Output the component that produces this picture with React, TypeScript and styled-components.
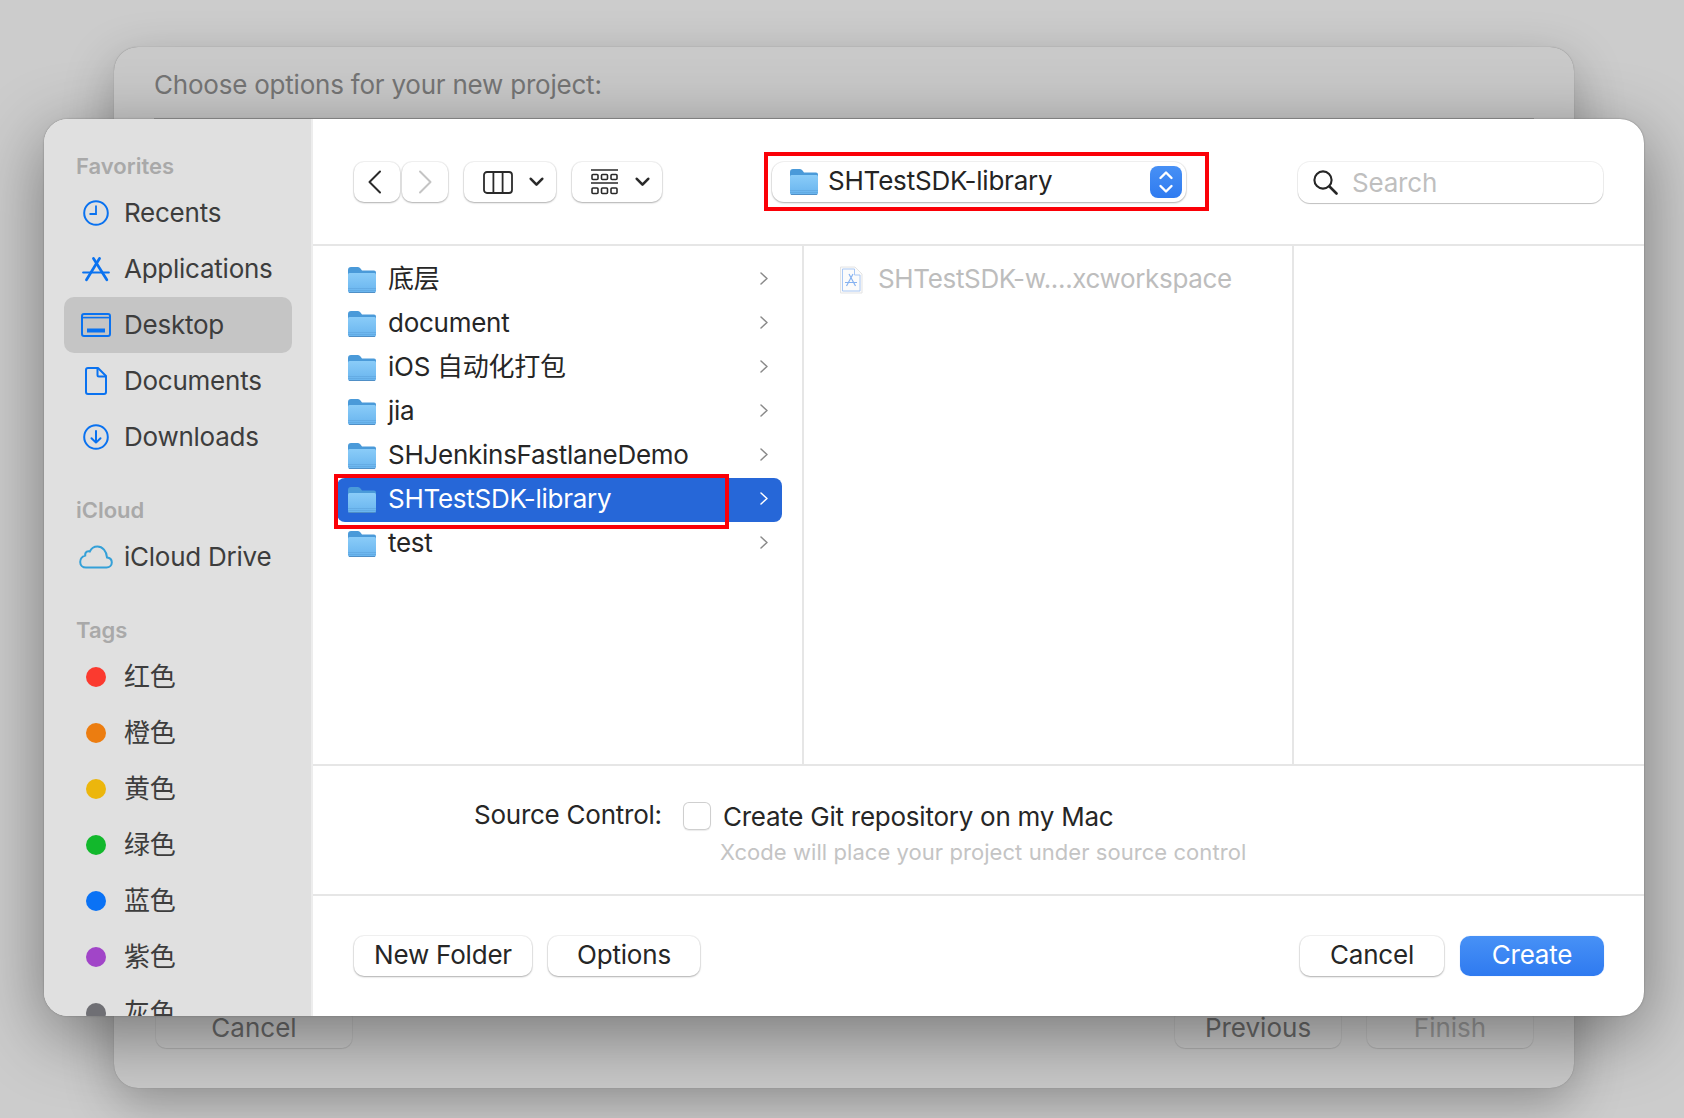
import React from 'react';
import styled, { createGlobalStyle } from 'styled-components';

const Global = createGlobalStyle`
  html, body { margin: 0; padding: 0; }
  body { font-family: Inter, "Noto Sans CJK SC", sans-serif; }
`;

const SANS = 'Inter, "Noto Sans CJK SC", sans-serif';

const Page = styled.div`
  position: relative; width: 1684px; height: 1118px; overflow: hidden;
  background: #cccccc; box-sizing: border-box; padding: 47px 110px 30px 114px;
  font-family: ${SANS};
`;
const BackWindow = styled.div`
  height: 1041px; box-sizing: border-box; border-radius: 24px; background: #c9c9c9;
  box-shadow: 0 0 1px #777, 0 16px 50px rgba(0,0,0,.28);
  padding: 25px 40px 40px; display: flex; flex-direction: column; justify-content: space-between;
`;
const BackTitle = styled.div`
  font-size: 26px; line-height: 26px; color: #757575; height: 46px; border-bottom: 2px solid #9a9a9a;
  letter-spacing: -0.22px;
`;
const BackFooter = styled.div`display: flex; gap: 26px; padding: 0 1px 0 2px;`;
const BackButton = styled.div<{ $faded?: boolean; $first?: boolean; $w: number }>`
  width: ${p => p.$w}px; height: 40px; box-sizing: border-box; border-radius: 10px;
  display: flex; align-items: center; justify-content: center; font-size: 26px; padding-bottom: 2px;
  background: rgba(255,255,255,.03); box-shadow: 0 0 0 1px rgba(0,0,0,.04), 0 1px 1px rgba(0,0,0,.08);
  color: ${p => (p.$faded ? '#9a9a9a' : '#6a6a6a')};
  margin-right: ${p => (p.$first ? 'auto' : '0')};
`;

const Dialog = styled.div`
  position: absolute; left: 44px; top: 119px; width: 1600px; height: 897px;
  border-radius: 24px; overflow: hidden; display: flex; background: #fff;
  box-shadow: 0 0 1.5px #666, 0 18px 70px rgba(0,0,0,.42);
`;
const Sidebar = styled.aside`
  flex: none; background: #e0e0e0; border-right: 2px solid #ededed;
  padding: 31px 19px 0 20px; width: 228px; overflow: hidden;
`;
const GroupLabel = styled.div<{ $mt?: number }>`
  font-size: 22px; font-weight: 600; line-height: 32px; color: #a9a9a9; padding-left: 12px;
  margin-top: ${p => p.$mt ?? 0}px; margin-bottom: 3px;
`;
const SideItem = styled.div<{ $active?: boolean }>`
  height: 56px; border-radius: 10px; display: flex; align-items: center; box-sizing: border-box;
  background: ${p => (p.$active ? '#c5c5c5' : 'transparent')};
  font-size: 26px; line-height: 32px; color: #3d3d3d; letter-spacing: -0.25px;
`;
const SideIcon = styled.span`
  width: 57px; padding-left: 3px; flex: none; display: flex; justify-content: center;
`;
const SideText = styled.span``;
const Dot = styled.span<{ $c: string }>`
  width: 20px; height: 20px; border-radius: 50%; background: ${p => p.$c}; display: block;
`;

const Main = styled.main`flex: 1; min-width: 0; display: flex; flex-direction: column;`;
const Toolbar = styled.div`
  height: 127px; flex: none; box-sizing: border-box; border-bottom: 2px solid #e6e6e6;
  display: flex; align-items: center; padding: 1px 41px 0;
`;
const ToolButton = styled.div<{ $w: number; $ml?: number; $pl?: number; $gap?: number; $pr?: number }>`
  width: ${p => p.$w}px; height: 40px; box-sizing: border-box; border-radius: 10px; background: #fff;
  margin-left: ${p => p.$ml ?? 0}px; display: flex; align-items: center;
  justify-content: ${p => (p.$pl ? 'flex-start' : 'center')};
  padding: 0 ${p => p.$pr ?? 0}px 0 ${p => p.$pl ?? 0}px; gap: ${p => p.$gap ?? 16}px;
  box-shadow: 0 0 0 1px rgba(0,0,0,.05), 0 1px 2px rgba(0,0,0,.28);
`;
const PathPopup = styled.div`
  position: relative; width: 414px; height: 40px; margin-left: 110px; border-radius: 12px; background: #fff;
  box-shadow: 0 0 0 1px rgba(0,0,0,.05), 0 1px 2px rgba(0,0,0,.28);
  display: flex; align-items: center; padding: 0 4px 0 18px; box-sizing: border-box; gap: 10px;
  font-size: 26px; line-height: 32px; color: #242424; letter-spacing: -0.2px;
`;
const PopupText = styled.span`margin-bottom: 3px;`;
const Stepper = styled.span`
  margin-left: auto; width: 32px; height: 32px; border-radius: 8px; display: flex; align-items: center; justify-content: center;
  background: linear-gradient(#4790f5, #2f7bf0);
`;
const RedFrame = styled.div`
  position: absolute; pointer-events: none; border: 4px solid #fb0007; box-sizing: border-box;
  left: -8px; top: -10px; width: 445px; height: 59px;
`;
const SearchBox = styled.div`
  margin-left: auto; width: 305px; height: 41px; box-sizing: border-box; border-radius: 12px;
  box-shadow: 0 0 0 1px rgba(0,0,0,.06), 0 1px 1px rgba(0,0,0,.2);
  display: flex; align-items: center; padding-left: 15px; gap: 14px;
  font-size: 26px; color: #bfbfbf; letter-spacing: -0.2px;
`;

const Columns = styled.div`
  height: 518px; flex: none; display: grid; grid-template-columns: 491px 490px 1fr; border-bottom: 2px solid #e6e6e6;
`;
const Column = styled.div`
  border-right: 2px solid #e6e6e6; padding: 12px 20px 0 24px; box-sizing: border-box;
  &:last-child { border-right: none; }
`;
const FileRow = styled.div<{ $selected?: boolean }>`
  position: relative; height: 44px; display: flex; align-items: center; gap: 12px; padding: 0 14px 0 11px;
  border-radius: 8px; font-size: 26px; line-height: 32px; letter-spacing: -0.27px;
  background: ${p => (p.$selected ? '#2667d8' : 'transparent')};
  color: ${p => (p.$selected ? '#fff' : '#262626')};
`;
const RowText = styled.span`margin-bottom: 2px;`;
const RowRed = styled.div`
  position: absolute; pointer-events: none; border: 4px solid #fb0007; box-sizing: border-box;
  left: -3px; top: -4px; width: 395px; height: 55px;
`;
const Chevron = styled.span`margin: 0 0 3px auto; display: flex;`;
const FileName = styled.span`color: #bdbdbd; margin: 0 0 2px 3px; letter-spacing: -0.35px;`;

const SourceSection = styled.div`
  height: 130px; flex: none; box-sizing: border-box; border-bottom: 2px solid #e6e6e6;
  padding: 36px 0 0 161px; display: grid; grid-template-columns: 209px 41px 1fr; grid-template-rows: 28px auto;
  align-items: center; align-content: start; font-size: 26px; color: #262626;
`;
const SourceLabel = styled.span`letter-spacing: -0.25px; margin-bottom: 3px;`;
const Checkbox = styled.span`
  width: 28px; height: 28px; box-sizing: border-box; border-radius: 6px; background: #fff;
  box-shadow: inset 0 0 0 1px #cfcfcf, 0 1px 1px rgba(0,0,0,.08);
`;
const CheckLabel = styled.span`letter-spacing: -0.25px; margin-left: -1px;`;
const Hint = styled.div`
  grid-column: 3; margin: 8px 0 0 -4px; font-size: 22px; line-height: 28px; color: #c4c4c4; letter-spacing: 0.06px;
`;

const BottomBar = styled.div`flex: 1; display: flex; align-items: center; padding: 0 40px 0 41px; gap: 16px;`;
const Button = styled.div<{ $w: number; $primary?: boolean; $push?: boolean }>`
  width: ${p => p.$w}px; height: 40px; box-sizing: border-box; border-radius: 10px; padding-bottom: 3px;
  display: flex; align-items: center; justify-content: center; font-size: 26px; letter-spacing: -0.2px;
  margin-left: ${p => (p.$push ? 'auto' : '0')};
  color: ${p => (p.$primary ? '#fff' : '#262626')};
  background: ${p => (p.$primary ? 'linear-gradient(#4791f6, #2f7af0)' : '#fff')};
  box-shadow: ${p => (p.$primary ? '0 0 1px rgba(47,122,240,.4)' : '0 0 0 1px rgba(0,0,0,.05), 0 1px 2px rgba(0,0,0,.28)')};
`;

const BLUE = '#0a72f0';

const Clock = () => (
  <svg width="26" height="26" viewBox="0 0 26 26" fill="none" stroke={BLUE} strokeWidth="2">
    <circle cx="13" cy="13" r="11.8" />
    <path d="M13 5.5V14H6.5" strokeWidth="1.8" />
  </svg>
);
const AppIcon = () => (
  <svg width="28" height="25" viewBox="0 0 28 25" fill="none" stroke={BLUE} strokeWidth="2.7" strokeLinecap="round">
    <path d="M11.5 1.5L24.8 22.8" />
    <path d="M17.5 1.5L4.5 22.8" />
    <path d="M1.2 15.5H26.8" strokeWidth="2.2" />
  </svg>
);
const DesktopIcon = () => (
  <svg width="30" height="24" viewBox="0 0 30 24" fill="none">
    <rect x="1" y="1" width="28" height="22" rx="2" stroke={BLUE} strokeWidth="2" />
    <path d="M1 4.6H29" stroke={BLUE} strokeWidth="1.6" />
    <rect x="6" y="15.5" width="18" height="4" fill={BLUE} />
  </svg>
);
const DocIcon = () => (
  <svg width="22" height="28" viewBox="0 0 22 28" fill="none" stroke={BLUE} strokeWidth="2" strokeLinejoin="round">
    <path d="M3 1H13L21 9V25Q21 27 19 27H3Q1 27 1 25V3Q1 1 3 1Z" />
    <path d="M12.5 1.5V8Q12.5 9.5 14 9.5H20.5" />
  </svg>
);
const DownIcon = () => (
  <svg width="26" height="26" viewBox="0 0 26 26" fill="none" stroke={BLUE} strokeWidth="2" strokeLinecap="round" strokeLinejoin="round">
    <circle cx="13" cy="13" r="11.8" />
    <path d="M13 7V18.5M8.5 14.2L13 18.6L17.5 14.2" />
  </svg>
);
const CloudIcon = () => (
  <svg width="34" height="24" viewBox="0 0 34 24" fill="none" stroke="#34a0d8" strokeWidth="2">
    <path d="M7 22.5H27.5C30.5 22.5 32.8 20.3 32.8 17.4C32.8 14.6 30.8 12.7 28 12.4C27.6 6.2 23.6 1.5 18.4 1.5C14.8 1.5 12.2 3.5 10.8 6.5C9.8 6 8.8 6 7.8 6.6C6.5 7.4 6 9 6.2 10.6C3.2 11.5 1.2 14 1.2 16.9C1.2 20.2 3.7 22.5 7 22.5Z" />
  </svg>
);
const Folder = () => (
  <svg width="28" height="26" viewBox="0 0 28 26" style={{ flex: 'none' }}>
    <defs>
      <linearGradient id="fb" x1="0" y1="0" x2="0" y2="1">
        <stop offset="0" stopColor="#8accf8" />
        <stop offset="1" stopColor="#68b4ee" />
      </linearGradient>
    </defs>
    <path d="M0 3Q0 0 3 0H10Q11.5 0 12.5 1.5L14 3.5H26Q28 3.5 28 5.5V10H0Z" fill="#4a9ad9" />
    <path d="M0 7.5Q0 6 1.5 6H26.5Q28 6 28 7.5V24Q28 26 26 26H2Q0 26 0 24Z" fill="url(#fb)" />
    <path d="M0 21.5H28M0 23.5H28" stroke="#5a9fd8" strokeWidth=".7" opacity=".7" />
    <path d="M1 25.5H27" stroke="#4a86bd" strokeWidth="1" opacity=".8" />
  </svg>
);
const NavChevron = ({ dir, color }: { dir: 'l' | 'r'; color: string }) => (
  <svg width="14" height="24" viewBox="0 0 14 24" fill="none" stroke={color} strokeWidth="2" strokeLinecap="round" strokeLinejoin="round">
    <path d={dir === 'l' ? 'M12 1.5L1.5 12L12 22.5' : 'M2 1.5L12.5 12L2 22.5'} />
  </svg>
);
const SmallDown = () => (
  <svg width="15" height="10" viewBox="0 0 15 10" fill="none" stroke="#2a2a2a" strokeWidth="2.6" strokeLinecap="round" strokeLinejoin="round">
    <path d="M1.8 1.8L7.5 7.6L13.2 1.8" />
  </svg>
);
const ColumnsIcon = () => (
  <svg width="30" height="23" viewBox="0 0 30 23" fill="none" stroke="#2a2a2a" strokeWidth="1.8">
    <rect x="1" y="1" width="28" height="21" rx="3" />
    <path d="M10.4 1V22M19.6 1V22" />
  </svg>
);
const GalleryIcon = () => (
  <svg width="27" height="26" viewBox="0 0 27 26" fill="none" stroke="#2a2a2a" strokeWidth="1.6">
    <path d="M0 1H27M0 14H27" />
    <rect x="1" y="5.5" width="6" height="5" rx="1" /><rect x="10.5" y="5.5" width="6" height="5" rx="1" /><rect x="20" y="5.5" width="6" height="5" rx="1" />
    <rect x="1" y="19" width="6" height="5.5" rx="1" /><rect x="10.5" y="19" width="6" height="5.5" rx="1" /><rect x="20" y="19" width="6" height="5.5" rx="1" />
  </svg>
);
const StepperIcon = () => (
  <svg width="16" height="26" viewBox="0 0 16 26" fill="none" stroke="#fff" strokeWidth="2.4" strokeLinecap="round" strokeLinejoin="round">
    <path d="M2.5 9L8 3.5L13.5 9M2.5 17L8 22.5L13.5 17" />
  </svg>
);
const SearchIcon = () => (
  <svg width="25" height="25" viewBox="0 0 25 25" fill="none" stroke="#262626" strokeWidth="2.1" strokeLinecap="round">
    <circle cx="10" cy="10" r="8.6" />
    <path d="M16.5 16.5L23.5 23.5" strokeWidth="2.6" />
  </svg>
);
const RowChevron = ({ color }: { color: string }) => (
  <svg width="8" height="13" viewBox="0 0 8 13" fill="none" stroke={color} strokeWidth="1.5" strokeLinecap="round" strokeLinejoin="round">
    <path d="M1 1L7 6.5L1 12" />
  </svg>
);
const WorkspaceIcon = () => (
  <svg width="24" height="28" viewBox="0 0 24 28" style={{ flex: 'none' }}>
    <path d="M1.5 1H16L23 8V27H1.5Z" fill="#fbfbfb" stroke="#e4e4e4" />
    <path d="M3.5 3H15.5V9H21V25H3.5Z" fill="none" stroke="#a9c8f5" strokeWidth="1" />
    <path d="M10 8L16.5 20M14 8L7.5 20M6 16.5H18" fill="none" stroke="#86b2f0" strokeWidth="1.2" />
  </svg>
);

const folders = ['底层', 'document', 'iOS 自动化打包', 'jia', 'SHJenkinsFastlaneDemo', 'SHTestSDK-library', 'test'];
const tags: [string, string][] = [
  ['红色', '#fb3a2f'], ['橙色', '#ec7d10'], ['黄色', '#ecb60c'], ['绿色', '#12b82c'],
  ['蓝色', '#0a72f5'], ['紫色', '#a145c8'], ['灰色', '#6f6f74'],
];

export default function App() {
  return (
    <Page>
      <Global />
      <BackWindow>
        <BackTitle>Choose options for your new project:</BackTitle>
        <BackFooter>
          <BackButton $w={196} $first>Cancel</BackButton>
          <BackButton $w={166}>Previous</BackButton>
          <BackButton $w={166} $faded>Finish</BackButton>
        </BackFooter>
      </BackWindow>
      <Dialog>
        <Sidebar>
          <GroupLabel>Favorites</GroupLabel>
          <SideItem><SideIcon><Clock /></SideIcon><SideText>Recents</SideText></SideItem>
          <SideItem><SideIcon><AppIcon /></SideIcon><SideText>Applications</SideText></SideItem>
          <SideItem $active><SideIcon><DesktopIcon /></SideIcon><SideText>Desktop</SideText></SideItem>
          <SideItem><SideIcon><DocIcon /></SideIcon><SideText>Documents</SideText></SideItem>
          <SideItem><SideIcon><DownIcon /></SideIcon><SideText>Downloads</SideText></SideItem>
          <GroupLabel $mt={29}>iCloud</GroupLabel>
          <SideItem><SideIcon><CloudIcon /></SideIcon><SideText>iCloud Drive</SideText></SideItem>
          <GroupLabel $mt={29}>Tags</GroupLabel>
          {tags.map(([name, c]) => (
            <SideItem key={name}><SideIcon><Dot $c={c} /></SideIcon><SideText>{name}</SideText></SideItem>
          ))}
        </Sidebar>
        <Main>
          <Toolbar>
            <ToolButton $w={46} $pr={4}><NavChevron dir="l" color="#2a2a2a" /></ToolButton>
            <ToolButton $w={46} $ml={2}><NavChevron dir="r" color="#c4c4c4" /></ToolButton>
            <ToolButton $w={92} $ml={16} $pl={19}><ColumnsIcon /><SmallDown /></ToolButton>
            <ToolButton $w={90} $ml={16} $pl={19} $gap={17}><GalleryIcon /><SmallDown /></ToolButton>
            <PathPopup>
              <Folder />
              <PopupText>SHTestSDK-library</PopupText>
              <Stepper><StepperIcon /></Stepper>
              <RedFrame />
            </PathPopup>
            <SearchBox><SearchIcon />Search</SearchBox>
          </Toolbar>
          <Columns>
            <Column>
              {folders.map((f, i) => (
                <FileRow key={f} $selected={i === 5}>
                  <Folder />
                  <RowText>{f}</RowText>
                  <Chevron><RowChevron color={i === 5 ? '#fff' : '#8a8a8a'} /></Chevron>
                  {i === 5 && <RowRed />}
                </FileRow>
              ))}
            </Column>
            <Column>
              <FileRow><WorkspaceIcon /><FileName>SHTestSDK-w....xcworkspace</FileName></FileRow>
            </Column>
            <Column />
          </Columns>
          <SourceSection>
            <SourceLabel>Source Control:</SourceLabel>
            <Checkbox />
            <CheckLabel>Create Git repository on my Mac</CheckLabel>
            <Hint>Xcode will place your project under source control</Hint>
          </SourceSection>
          <BottomBar>
            <Button $w={178}>New Folder</Button>
            <Button $w={152}>Options</Button>
            <Button $w={144} $push>Cancel</Button>
            <Button $w={144} $primary>Create</Button>
          </BottomBar>
        </Main>
      </Dialog>
    </Page>
  );
}
